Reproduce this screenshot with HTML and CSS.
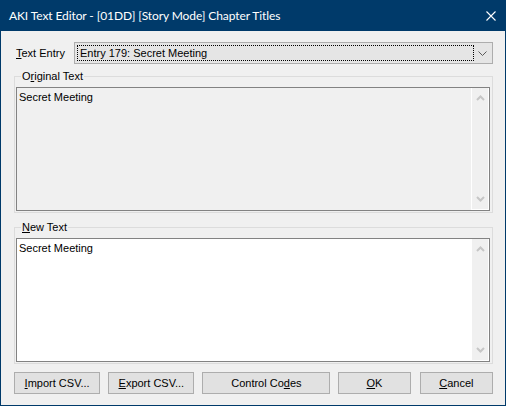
FILE: index.html
```html
<!DOCTYPE html>
<html>
<head>
<meta charset="utf-8">
<link rel="stylesheet" href="styles.css">
</head>
<body>
<div class="window">
  <div class="titlebar">
    <span class="title">AKI Text Editor - [01DD] [Story Mode] Chapter Titles</span>
    <svg class="close" width="10" height="10" viewBox="0 0 10 10"><path d="M0.5 0.5 L9.5 9.5 M9.5 0.5 L0.5 9.5" stroke="#fff" stroke-width="1.1" fill="none"/></svg>
  </div>
  <div class="client">
    <div class="entry-row">
      <span class="entry-label"><u>T</u>ext Entry</span>
      <div class="combo">
        <span class="combo-focus">Entry 179: Secret Meeting</span>
        <svg class="combo-arrow" width="9" height="5" viewBox="0 0 9 5"><path d="M0.5 0.5 L4.5 4.5 L8.5 0.5" stroke="#5a5a5a" stroke-width="1" fill="none"/></svg>
      </div>
    </div>

    <div class="group group-orig">
      <span class="legend">O<u>r</u>iginal Text</span>
      <div class="textbox readonly">
        <div class="textbox-text">Secret Meeting</div>
        <div class="vscroll">
          <svg width="9" height="6" viewBox="0 0 9 6"><path d="M1 5 L4.5 1.5 L8 5" stroke="#c6c6c6" stroke-width="2" fill="none"/></svg>
          <svg width="9" height="6" viewBox="0 0 9 6"><path d="M1 1 L4.5 4.5 L8 1" stroke="#c6c6c6" stroke-width="2" fill="none"/></svg>
        </div>
      </div>
    </div>

    <div class="group group-new">
      <span class="legend"><u>N</u>ew Text</span>
      <div class="textbox editable">
        <div class="textbox-text">Secret Meeting</div>
        <div class="vscroll">
          <svg width="9" height="6" viewBox="0 0 9 6"><path d="M1 5 L4.5 1.5 L8 5" stroke="#c6c6c6" stroke-width="2" fill="none"/></svg>
          <svg width="9" height="6" viewBox="0 0 9 6"><path d="M1 1 L4.5 4.5 L8 1" stroke="#c6c6c6" stroke-width="2" fill="none"/></svg>
        </div>
      </div>
    </div>

    <div class="buttons">
      <button class="btn btn-import"><u>I</u>mport CSV...</button>
      <button class="btn btn-export"><u>E</u>xport CSV...</button>
      <button class="btn btn-codes">Control Co<u>d</u>es</button>
      <button class="btn btn-ok"><u>O</u>K</button>
      <button class="btn btn-cancel"><u>C</u>ancel</button>
    </div>
  </div>
</div>
</body>
</html>
```

FILE: styles.css
```css
* { box-sizing: border-box; }
html, body {
  margin: 0;
  padding: 0;
  background: #f0f0f0;
}
body {
  font-family: "Liberation Sans", Arial, sans-serif;
  font-size: 11px;
  color: #000;
}
u { text-decoration: underline; text-underline-offset: 1px; }

.window {
  width: 506px;
  height: 406px;
  border: 1px solid #003a6a;
  border-top: none;
  display: flex;
  flex-direction: column;
  background: #f0f0f0;
}
.titlebar {
  height: 31px;
  margin: 0 -1px;
  background: #003a6a;
  display: flex;
  align-items: center;
  padding-left: 9px;
  padding-right: 10px;
  flex-shrink: 0;
}
.title {
  color: #fff;
  font-family: Lato, "Noto Sans", sans-serif;
  font-size: 12px;
  letter-spacing: -0.1px;
  flex: 1;
  padding-bottom: 1px;
}
.close { display: block; margin-right: 0; }

.client {
  flex: 1;
  padding: 0 12px 0 13px;
  display: flex;
  flex-direction: column;
}

.entry-row {
  display: flex;
  align-items: center;
  margin-top: 11px;
  height: 22px;
}
.entry-label {
  width: 60px;
  padding-left: 2px;
}
.combo {
  flex: 1;
  height: 22px;
  background: #e5e5e5;
  border: 1px solid #adadad;
  display: flex;
  align-items: center;
  padding: 2px;
  position: relative;
}
.combo-focus {
  display: block;
  width: 397px;
  height: 16px;
  line-height: 14px;
  padding-left: 2px;
  border: 1px dotted #000;
}
.combo-arrow {
  position: absolute;
  right: 5px;
  top: 8px;
}

.group {
  position: relative;
  border: 1px solid #dcdcdc;
  padding: 10px 2px 1px 1px;
  display: flex;
}
.group-orig { margin-top: 12px; height: 137px; }
.group-new { margin-top: 14px; height: 137px; }
.legend {
  position: absolute;
  top: -7px;
  left: 6px;
  padding: 0 1px;
  background: #f0f0f0;
  line-height: 13px;
}

.textbox {
  flex: 1;
  border: 1px solid #828282;
  display: flex;
  position: relative;
}
.textbox.readonly { background: #f0f0f0; }
.textbox.editable { background: #fff; }
.textbox-text {
  flex: 1;
  padding: 3px 2px;
  line-height: 13px;
}
.vscroll {
  width: 18px;
  background: #f0f0f0;
  border-left: 1px solid #fff;
  border-right: 1px solid #fff;
  border-bottom: 1px solid #fff;
  display: flex;
  flex-direction: column;
  justify-content: space-between;
  align-items: center;
  padding: 7px 0 7px;
}
.vscroll svg { display: block; }

.buttons {
  display: flex;
  gap: 8px;
  margin-top: 8px;
}
.btn {
  height: 22px;
  background: #e1e1e1;
  border: 1px solid #adadad;
  font-family: "Liberation Sans", Arial, sans-serif;
  font-size: 11px;
  color: #000;
  padding: 0;
  margin: 0;
}
.btn-import { width: 87px; }
.btn-export { width: 87px; }
.btn-codes { width: 129px; }
.btn-ok { width: 73px; }
.btn-cancel { width: 74px; margin-left: 1px; }
```
